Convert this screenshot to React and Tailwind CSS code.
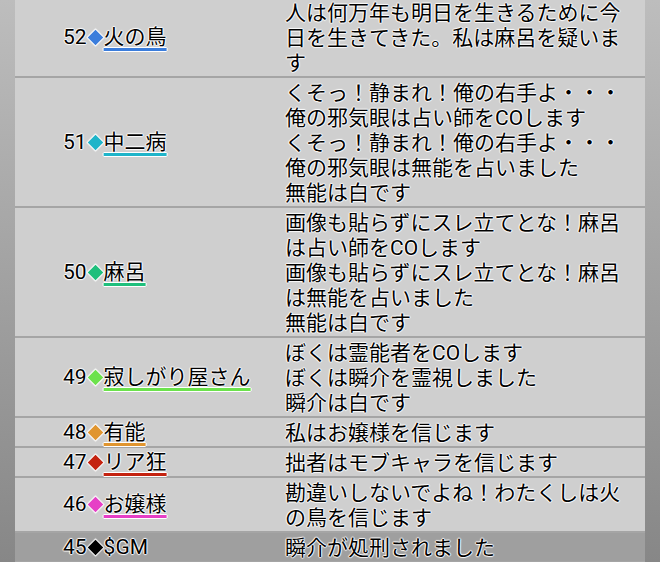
import React from 'react';

// chat log rows, newest first
const rows = [
  { no: 52, name: '火の鳥', color: '#3b7ddc', lines: ['人は何万年も明日を生きるために今', '日を生きてきた。私は麻呂を疑いま', 'す'] },
  { no: 51, name: '中二病', color: '#1fb4c9', lines: ['くそっ！静まれ！俺の右手よ・・・', '俺の邪気眼は占い師をCOします', 'くそっ！静まれ！俺の右手よ・・・', '俺の邪気眼は無能を占いました', '無能は白です'] },
  { no: 50, name: '麻呂', color: '#1fbf7c', lines: ['画像も貼らずにスレ立てとな！麻呂', 'は占い師をCOします', '画像も貼らずにスレ立てとな！麻呂', 'は無能を占いました', '無能は白です'] },
  { no: 49, name: '寂しがり屋さん', color: '#6ce24c', lines: ['ぼくは霊能者をCOします', 'ぼくは瞬介を霊視しました', '瞬介は白です'] },
  { no: 48, name: '有能', color: '#e0952f', lines: ['私はお嬢様を信じます'] },
  { no: 47, name: 'リア狂', color: '#c4220f', lines: ['拙者はモブキャラを信じます'] },
  { no: 46, name: 'お嬢様', color: '#e63fc6', lines: ['勘違いしないでよね！わたくしは火', 'の鳥を信じます'] },
  { no: 45, name: '$GM', color: '#000000', gm: true, lines: ['瞬介が処刑されました'] },
];

function LogRow({ row }) {
  return (
    <div className={`flex border-b-2 border-[#a5a5a5] ${row.gm ? 'bg-[#9f9f9f]' : 'bg-[#cfcfcf]'}`}>
      <div className="w-[255px] shrink-0 flex items-center pl-[48px] leading-[25px]">
        <span>{row.no}</span>
        <span
          className="inline-block w-[11px] h-[11px] rotate-45 mx-[3px] shadow-[0_0_1px_1px_#fff]"
          style={{ backgroundColor: row.color }}
        />
        <span
          className={row.gm ? '' : 'underline decoration-[2.5px] underline-offset-[4px]'}
          style={{ textDecorationColor: row.color }}
        >
          {row.name}
        </span>
      </div>
      <div className="flex-1 pl-[15px] pr-[8px] pt-[3px] leading-[25px]">
        {row.lines.map((l, i) => <div key={i}>{l}</div>)}
      </div>
    </div>
  );
}

export default function App() {
  return (
    <div className="h-[562px] overflow-hidden bg-linear-to-b from-[#bdbdbd] to-[#878787] px-[15px] text-[21px] text-black font-['Roboto','Noto_Sans_CJK_JP',sans-serif] [text-shadow:1px_0_1px_#fff,-1px_0_1px_#fff,0_1px_1px_#fff,0_-1px_1px_#fff]">
      <div className="-mt-[2px]">
        {rows.map(r => <LogRow key={r.no} row={r} />)}
      </div>
    </div>
  );
}
